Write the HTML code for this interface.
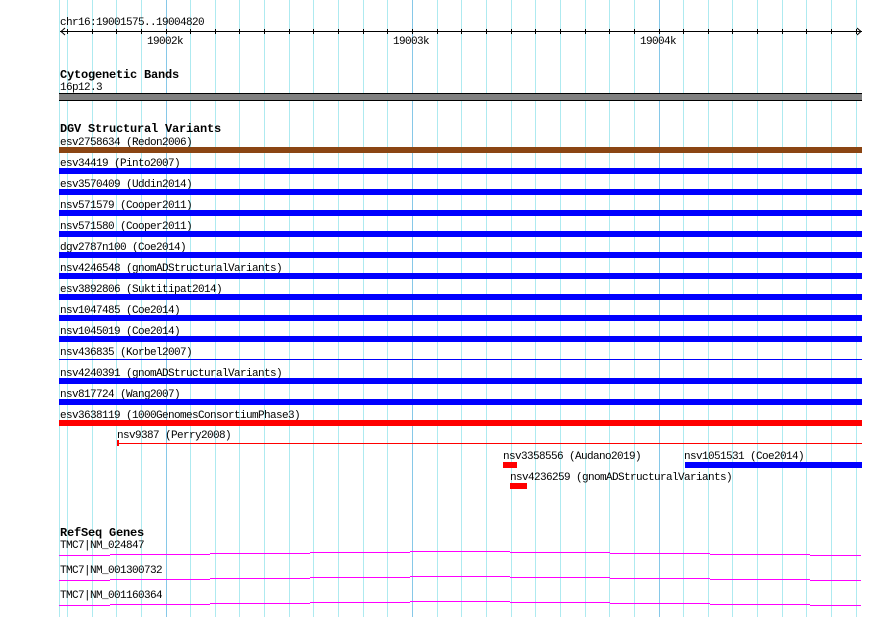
<!DOCTYPE html>
<html><head><meta charset="utf-8"><style>
html,body{margin:0;padding:0;background:#fff;}
svg{display:block;}
text{font-family:"Liberation Mono",monospace;font-size:11px;letter-spacing:-0.6px;fill:#000;}
.b{font-weight:bold;font-size:12px;letter-spacing:-0.2px;}
</style></head><body>
<svg width="890" height="617" viewBox="0 0 890 617" xmlns="http://www.w3.org/2000/svg" shape-rendering="crispEdges">
<rect width="890" height="617" fill="#fff"/>
<path stroke="#aeeaf0" stroke-width="1" fill="none" d="M59.5 0V617M67.5 0V617M92.5 0V617M116.5 0V617M141.5 0V617M190.5 0V617M215.5 0V617M239.5 0V617M264.5 0V617M289.5 0V617M313.5 0V617M338.5 0V617M363.5 0V617M387.5 0V617M437.5 0V617M461.5 0V617M486.5 0V617M511.5 0V617M535.5 0V617M560.5 0V617M585.5 0V617M609.5 0V617M634.5 0V617M683.5 0V617M708.5 0V617M732.5 0V617M757.5 0V617M782.5 0V617M806.5 0V617M831.5 0V617M856.5 0V617"/>
<path stroke="#86c8e8" stroke-width="1" fill="none" d="M166.5 0V617M412.5 0V617M659.5 0V617"/>
<path stroke="#000" stroke-width="1" fill="none" d="M67.5 29V34M92.5 29V34M116.5 29V34M141.5 29V34M166.5 29V34M190.5 29V34M215.5 29V34M239.5 29V34M264.5 29V34M289.5 29V34M313.5 29V34M338.5 29V34M363.5 29V34M387.5 29V34M412.5 29V34M437.5 29V34M461.5 29V34M486.5 29V34M511.5 29V34M535.5 29V34M560.5 29V34M585.5 29V34M609.5 29V34M634.5 29V34M659.5 29V34M683.5 29V34M708.5 29V34M732.5 29V34M757.5 29V34M782.5 29V34M806.5 29V34M831.5 29V34M856.5 29V34"/>
<text x="60" y="25">chr16:19001575..19004820</text>
<line x1="60" y1="31.5" x2="862" y2="31.5" stroke="#000"/>
<polyline points="65,28 61,31.5 65,35" fill="none" stroke="#000" shape-rendering="auto"/>
<polyline points="857,28 861,31.5 857,35" fill="none" stroke="#000" shape-rendering="auto"/>
<text x="147" y="44">19002k</text>
<text x="393" y="44">19003k</text>
<text x="640" y="44">19004k</text>

<text class="b" x="60" y="78">Cytogenetic Bands</text>
<text x="60" y="90">16p12.3</text>
<rect x="59" y="93" width="803" height="8" fill="#000"/>
<rect x="59" y="94" width="803" height="6" fill="#808080"/>

<text class="b" x="60" y="132">DGV Structural Variants</text>
<text x="60" y="145">esv2758634 (Redon2006)</text><rect x="59" y="147" width="803" height="6" fill="#8b4513"/>
<text x="60" y="166">esv34419 (Pinto2007)</text><rect x="59" y="168" width="803" height="6" fill="#0000ff"/>
<text x="60" y="187">esv3570409 (Uddin2014)</text><rect x="59" y="189" width="803" height="6" fill="#0000ff"/>
<text x="60" y="208">nsv571579 (Cooper2011)</text><rect x="59" y="210" width="803" height="6" fill="#0000ff"/>
<text x="60" y="229">nsv571580 (Cooper2011)</text><rect x="59" y="231" width="803" height="6" fill="#0000ff"/>
<text x="60" y="250">dgv2787n100 (Coe2014)</text><rect x="59" y="252" width="803" height="6" fill="#0000ff"/>
<text x="60" y="271">nsv4246548 (gnomADStructuralVariants)</text><rect x="59" y="273" width="803" height="6" fill="#0000ff"/>
<text x="60" y="292">esv3892806 (Suktitipat2014)</text><rect x="59" y="294" width="803" height="6" fill="#0000ff"/>
<text x="60" y="313">nsv1047485 (Coe2014)</text><rect x="59" y="315" width="803" height="6" fill="#0000ff"/>
<text x="60" y="334">nsv1045019 (Coe2014)</text><rect x="59" y="336" width="803" height="6" fill="#0000ff"/>
<text x="60" y="355">nsv436835 (Korbel2007)</text><rect x="59" y="359" width="803" height="1" fill="#0000ff"/>
<text x="60" y="376">nsv4240391 (gnomADStructuralVariants)</text><rect x="59" y="378" width="803" height="6" fill="#0000ff"/>
<text x="60" y="397">nsv817724 (Wang2007)</text><rect x="59" y="399" width="803" height="6" fill="#0000ff"/>
<text x="60" y="418">esv3638119 (1000GenomesConsortiumPhase3)</text><rect x="59" y="420" width="803" height="6" fill="#ff0000"/>
<text x="117" y="438">nsv9387 (Perry2008)</text>
<rect x="117" y="440" width="2" height="6" fill="#ff0000"/><rect x="119" y="443" width="743" height="1" fill="#ff0000"/>
<text x="503" y="459">nsv3358556 (Audano2019)</text><rect x="503" y="462" width="14" height="6" fill="#ff0000"/>
<text x="684" y="459">nsv1051531 (Coe2014)</text><rect x="685" y="462" width="177" height="6" fill="#0000ff"/>
<text x="510" y="480">nsv4236259 (gnomADStructuralVariants)</text><rect x="510" y="483" width="17" height="6" fill="#ff0000"/>

<text class="b" x="60" y="536">RefSeq Genes</text>
<text x="60" y="548">TMC7|NM_024847</text>
<text x="60" y="573">TMC7|NM_001300732</text>
<text x="60" y="598">TMC7|NM_001160364</text>
<path stroke="#ff00ff" stroke-width="1" fill="none" d="M59 555.5H110M110 554.5H210M210 553.5H310M310 552.5H410M410 551.5H510M510 552.5H610M610 553.5H710M710 554.5H810M810 555.5H861"/>
<path stroke="#ff00ff" stroke-width="1" fill="none" d="M59 580.5H110M110 579.5H210M210 578.5H310M310 577.5H410M410 576.5H510M510 577.5H610M610 578.5H710M710 579.5H810M810 580.5H861"/>
<path stroke="#ff00ff" stroke-width="1" fill="none" d="M59 605.5H110M110 604.5H210M210 603.5H310M310 602.5H410M410 601.5H510M510 602.5H610M610 603.5H710M710 604.5H810M810 605.5H861"/>
</svg>
</body></html>
